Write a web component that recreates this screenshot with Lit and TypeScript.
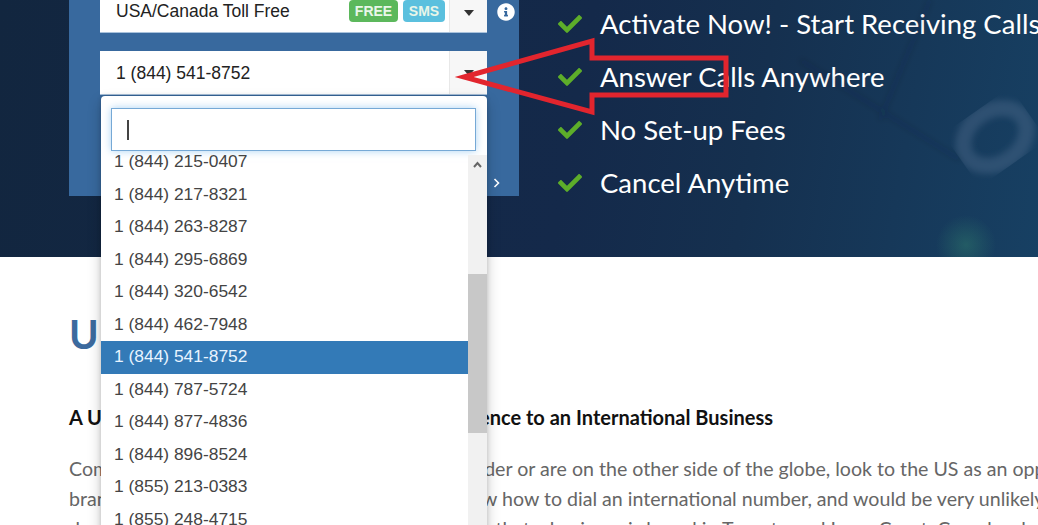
import { LitElement, html, css, svg } from "lit";
import { customElement } from "lit/decorators.js";

const NUMBERS = [
  "1 (844) 215-0407", "1 (844) 217-8321", "1 (844) 263-8287", "1 (844) 295-6869",
  "1 (844) 320-6542", "1 (844) 462-7948", "1 (844) 541-8752", "1 (844) 787-5724",
  "1 (844) 877-4836", "1 (844) 896-8524", "1 (855) 213-0383", "1 (855) 248-4715",
];
const SELECTED = "1 (844) 541-8752";
const FEATURES = ["Activate Now! - Start Receiving Calls", "Answer Calls Anywhere", "No Set-up Fees", "Cancel Anytime"];

const CHECK = svg`<path d="M173.898 439.404l-166.4-166.4c-9.997-9.997-9.997-26.206 0-36.204l36.203-36.204c9.997-9.998 26.207-9.998 36.204 0L192 312.69 432.095 72.596c9.997-9.997 26.207-9.997 36.204 0l36.203 36.204c9.997 9.997 9.997 26.206 0 36.204l-294.4 294.401c-9.998 9.997-26.207 9.997-36.204-.001z"/>`;
const INFO = svg`<path d="M256 8C119 8 8 119 8 256s111 248 248 248 248-111 248-248S393 8 256 8zm0 110c23.2 0 42 18.8 42 42s-18.8 42-42 42-42-18.8-42-42 18.8-42 42-42zm56 254c0 6.6-5.4 12-12 12h-88c-6.6 0-12-5.4-12-12v-24c0-6.6 5.4-12 12-12h12v-64h-12c-6.6 0-12-5.4-12-12v-24c0-6.6 5.4-12 12-12h64c6.6 0 12 5.4 12 12v100h12c6.6 0 12 5.4 12 12v24z"/>`;

@customElement("app-root")
export class AppRoot extends LitElement {
  static styles = css`
    :host { display: block; position: relative; width: 1038px; height: 525px; overflow: hidden; background: #fff; font-family: "Liberation Sans", Arial, sans-serif; }
    .hero { position: relative; display: flex; align-items: flex-start; height: 257px; padding-left: 69px; box-sizing: border-box;
      background: linear-gradient(100deg, #12263f 0%, #14294a 55%, #15304f 72%, #174063 100%); }
    .decor { position: absolute; inset: 0; width: 100%; height: 100%; }
    .panel { position: relative; width: 450px; height: 206px; margin-top: -10px; padding: 0 32px 0 31px; box-sizing: border-box; background: #38699e; flex: none; }
    .select { display: flex; height: 43px; width: 387px; background: #fff; border-bottom: 1px solid #a9c2dc; box-sizing: border-box; font-size: 17.5px; color: #222; }
    .select + .select { margin-top: 18px; height: 44px; }
    .value { flex: 1; display: flex; align-items: center; padding: 2px 0 0 16px; }
    .value.top { align-items: flex-end; padding: 0 0 10px 16px; box-sizing: border-box; }
    .badge { height: 22px; border-radius: 4px; color: #e9f6e9; font-size: 14px; font-weight: bold; display: flex; align-items: center; justify-content: center; box-sizing: border-box; }
    .free { width: 49px; background: #5cb85c; }
    .sms { width: 42px; background: #5bc0de; margin-left: 5px; margin-right: 4px; }
    .badges { display: flex; align-items: center; }
    .top-row { display: flex; flex: 1; }
    .caret-btn { width: 38px; flex: none; background: #f7f7f7; border-left: 1px solid #e8e8e8; box-sizing: border-box; display: flex; align-items: center; justify-content: center; padding-top: 4px; }
    .caret-btn.second { padding-top: 0; }
    .caret { width: 0; height: 0; border-left: 5px solid transparent; border-right: 5px solid transparent; border-top: 6px solid #333; }
    .info { position: absolute; left: 428px; top: 13px; width: 18px; height: 18px; fill: #fff; }
    .chev { position: absolute; left: 424px; top: 188px; color: #fff; width: 7px; height: 10px; }
    .dropdown { position: absolute; left: 32px; top: 106px; width: 386px; height: 470px; background: #fff; border-radius: 4px 4px 0 0; box-shadow: 0 6px 14px rgba(0,0,0,.22), 0 0 4px rgba(0,0,0,.15); z-index: 2; display: flex; flex-direction: column; }
    .search-wrap { padding: 12px 11px 4px 10px; }
    .search { height: 43px; box-sizing: border-box; border: 1px solid #76a9d6; box-shadow: 0 0 8px rgba(102,175,233,.55); padding: 11px 0 0 15px; background: #fff; }
    .cursor { width: 2px; height: 20px; background: #444; }
    .list-wrap { flex: 1; display: flex; overflow: hidden; }
    .list { flex: 1; overflow: hidden; }
    .list-inner { margin-top: -9px; }
    .opt { height: 32.5px; line-height: 31.5px; padding-left: 13px; color: #444; font-size: 17.4px; }
    .opt.sel { background: #337ab7; color: #e8f4ff; }
    .track { position: relative; width: 19px; background: #f1f1f1; flex: none; }
    .thumb { position: absolute; left: 0; right: 0; top: 119px; height: 159px; background: #c8c8c8; }
    .up { position: absolute; left: 5px; top: 6px; width: 9px; height: 7px; fill: none; stroke: #666; stroke-width: 2; }
    .features { margin: 0 0 0 39px; padding: 0; list-style: none; font-family: Lato, sans-serif; font-size: 27.5px; color: #fff; }
    .features li { display: flex; align-items: center; height: 53px; white-space: nowrap; }
    .features li:first-child { margin-top: -3px; }
    .features svg { width: 24px; height: 24px; fill: #5dad2a; margin-right: 18px; flex: none; }
    .content { padding: 53px 0 0 69px; font-family: Lato, sans-serif; white-space: nowrap; }
    h1 { margin: 0; font-size: 40px; line-height: 48px; font-weight: 700; color: #3c6a9e; letter-spacing: 4px; }
    h2 { margin: 47px 0 0; font-size: 20px; line-height: 24px; font-weight: 700; color: #111; }
    p { margin: 25px 0 0; font-size: 19.6px; line-height: 30px; color: #666; }
    .arrow { position: absolute; left: 0; top: 0; width: 1038px; height: 525px; z-index: 3; pointer-events: none; fill: none; stroke: #e2252e; stroke-width: 5; stroke-linejoin: miter; }
  `;

  render() {
    return html`
      <section class="hero">
        <svg class="decor" viewBox="0 0 1038 257" aria-hidden="true">
          <defs>
            <radialGradient id="g"><stop offset="0" stop-color="#2f7a6b" stop-opacity=".5"/><stop offset="1" stop-color="#2f7a6b" stop-opacity="0"/></radialGradient>
            <filter id="b"><feGaussianBlur stdDeviation="3"/></filter>
          </defs>
          <path d="M930 0 L880 120 M800 60 L960 160" stroke="#0f2338" stroke-opacity=".2" stroke-width="3" fill="none" filter="url(#b)"/>
          <ellipse cx="995" cy="137" rx="34" ry="26" transform="rotate(-35 995 137)" fill="none" stroke="#49698a" stroke-opacity=".45" stroke-width="16" filter="url(#b)"/>
          <ellipse cx="966" cy="245" rx="30" ry="30" fill="url(#g)"/>
        </svg>
        <div class="panel">
          <div class="select">
            <div class="top-row">
              <div class="value top">USA/Canada Toll Free</div>
              <div class="badges">
                <span class="badge free">FREE</span>
                <span class="badge sms">SMS</span>
              </div>
            </div>
            <div class="caret-btn"><span class="caret"></span></div>
          </div>
          <div class="select">
            <div class="value">1 (844) 541-8752</div>
            <div class="caret-btn second"><span class="caret"></span></div>
          </div>
          <svg class="info" viewBox="0 0 512 512">${INFO}</svg>
          <svg class="chev" viewBox="0 0 7 10" fill="none" stroke="currentColor" stroke-width="1.6"><path d="M1.5 1l4 4-4 4"/></svg>
          <div class="dropdown">
            <div class="search-wrap"><div class="search"><div class="cursor"></div></div></div>
            <div class="list-wrap">
              <div class="list"><div class="list-inner">
                ${NUMBERS.map((n) => html`<div class="opt ${n === SELECTED ? "sel" : ""}">${n}</div>`)}
              </div></div>
              <div class="track">
                <svg class="up" viewBox="0 0 9 7"><path d="M1 6l3.5-4L8 6"/></svg>
                <div class="thumb"></div>
              </div>
            </div>
          </div>
        </div>
        <ul class="features">
          ${FEATURES.map((f) => html`<li><svg viewBox="0 0 512 512">${CHECK}</svg>${f}</li>`)}
        </ul>
      </section>
      <section class="content">
        <h1>US Phone Numbers</h1>
        <h2>A US Phone Number Adds Credibility and Presence to an International Business</h2>
        <p>Companies, whether you are right across the border or are on the other side of the globe, look to the US as an opportunity for growth.<br>brands, and US customers very often do not know how to dial an international number, and would be very unlikely to call one.<br>do not really wish to even consider the possibility that a business is based in Toronto and Ivory Coast, Canada, elsewhere.</p>
      </section>
      <svg class="arrow" viewBox="0 0 1038 525" aria-hidden="true">
        <path d="M464 77 L592 41 V58 H726 V95 H592 V112 Z"/>
      </svg>
    `;
  }
}
